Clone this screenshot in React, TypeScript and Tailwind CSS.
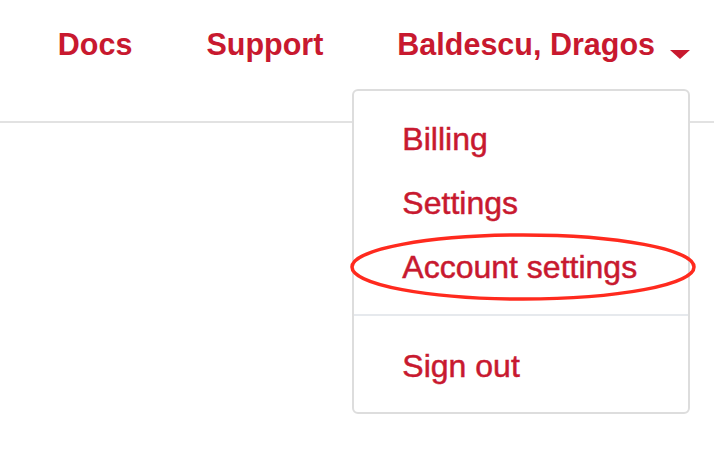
import React from 'react';

const red = 'text-[#c8192f]';

function Caret() {
  return (
    <svg width="20" height="10" viewBox="0 0 20 10" className="mt-[24px]">
      <path d="M0 0 L20 0 L10 9 Z" fill="#c8192f" />
    </svg>
  );
}

function AccountMenu() {
  const items = ['Billing', 'Settings', 'Account settings'];
  const item = `h-[64px] pl-[48px] text-[32px] leading-[64px] [-webkit-text-stroke:0.5px_#c8192f] ${red}`;
  return (
    <div className="absolute left-[-45px] top-[63px] w-[338px] rounded-[6px] border-2 border-[#dddddd] bg-white pt-[16px] pb-[14px] font-normal">
      {items.map((label) => (
        <div key={label} className={item}>
          {label}
        </div>
      ))}
      <div className="mt-[15px] mb-[18px] h-[2px] bg-[#e6e9ed]" />
      <div className={item}>Sign out</div>

      {/* annotation circled around "Account settings" */}
      <svg
        className="absolute left-[-4px] top-[141px] pointer-events-none"
        width="348"
        height="70"
        viewBox="0 0 348 70"
      >
        <ellipse cx="173" cy="35" rx="171" ry="32" fill="none" stroke="#ff2a1e" strokeWidth="3.5" />
      </svg>
    </div>
  );
}

export default function App() {
  return (
    <div className="min-h-screen bg-white font-['Liberation_Sans',Arial,sans-serif]">
      <header className="h-[123px] border-b-2 border-[#e2e2e2] flex justify-end items-start pt-[26px] pr-[24px]">
        <nav className={`flex items-start gap-[74px] text-[30.5px] font-bold leading-[36px] ${red}`}>
          <span>Docs</span>
          <span>Support</span>
          <div className="relative flex items-start gap-[15px]">
            <span>Baldescu, Dragos</span>
            <Caret />
            <AccountMenu />
          </div>
        </nav>
      </header>
    </div>
  );
}
